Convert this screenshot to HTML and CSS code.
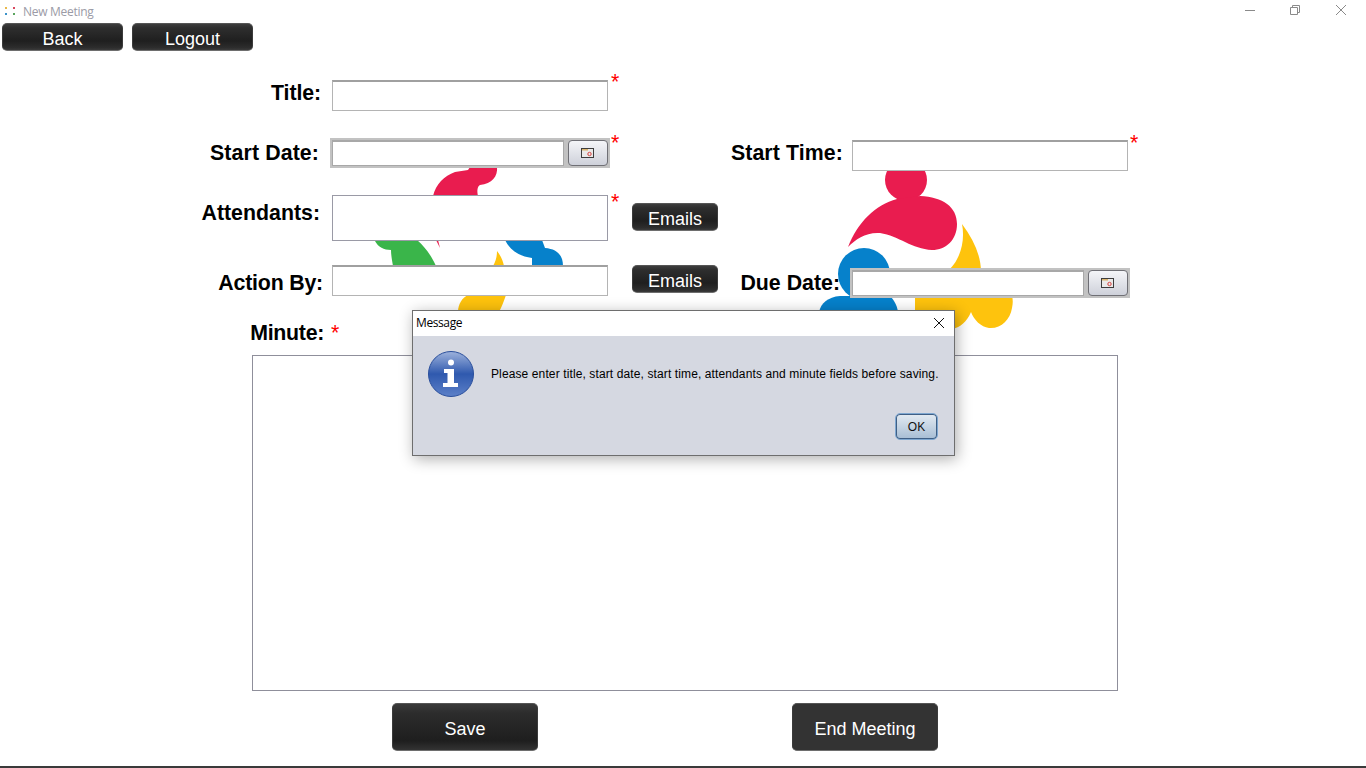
FILE: index.html
```html
<!DOCTYPE html>
<html lang="en">
<head>
<meta charset="utf-8">
<title>New Meeting</title>
<link rel="stylesheet" href="styles.css">
</head>
<body>
<div class="app">
  <svg class="logos" viewBox="0 0 1366 768" width="1366" height="768" aria-hidden="true">
    <g class="red">
      <path d="M433 196C436 184 444 176 455 172L468 170L470 167H497C498 176 492 184 480 185C477 187 477 191 478 196Z"/>
      <path d="M436 240L440 248L438 240Z"/>
      <circle cx="906" cy="180" r="21"/>
      <path d="M848 247C858 222 875 205 897 199L920 196C943 197 957 207 957 224C957 240 946 250 932 250C912 249 899 236 880 233C866 232 856 239 848 247Z"/>
    </g>
    <g class="green">
      <path d="M375 241C378 247 384 250 391 250C391 255 392 260 393 266H436C431 255 425 247 417 240Z"/>
    </g>
    <g class="blue">
      <path d="M505 240C510 250 518 256 532 258V266H563C563 256 558 249 545 248L542 240Z"/>
      <circle cx="864" cy="274" r="26"/>
      <path d="M819 312C821 303 828 297 840 296H890C894 300 897 305 898 312V330H819Z"/>
    </g>
    <g class="yellow">
      <path d="M497 251C501 256 503 261 504 266H493C496 261 497 256 497 251Z"/>
      <path d="M458 312C458 304 462 298 468 295H506C504 301 502 306 499 312Z"/>
      <path d="M962 224C974 240 981 256 981 272H946C958 264 966 244 962 224Z"/>
      <path d="M915 296H1012C1013 300 1013 303 1012 308C1010 320 1001 329 989 328C981 327 974 320 971 312C967 322 960 327 953 329L915 312Z"/>
    </g>
  </svg>

  <header class="titlebar">
    <svg class="app-icon" viewBox="0 0 11 8" width="11" height="8" aria-hidden="true">
      <rect class="dot-a" x="0" y="0" width="2" height="2"/>
      <rect class="dot-b" x="8" y="0" width="2" height="2"/>
      <rect class="dot-c" x="0" y="6" width="2" height="2"/>
      <rect class="dot-d" x="8" y="6" width="2" height="2"/>
    </svg>
    <span class="window-title">New Meeting</span>
    <div class="window-controls">
      <svg class="win-min" viewBox="0 0 10 1" width="10" height="1" aria-hidden="true"><path d="M0 .5H10"/></svg>
      <svg class="win-max" viewBox="0 0 10 10" width="10" height="10" aria-hidden="true"><path d="M.5 2.5H7.5V9.5H.5ZM2.5 2.5V.5H9.5V7.5H7.5"/></svg>
      <svg class="win-close" viewBox="0 0 10 10" width="10" height="10" aria-hidden="true"><path d="M0 0L10 10M10 0L0 10"/></svg>
    </div>
  </header>

  <nav class="toolbar">
    <button class="btn btn-nav">Back</button>
    <button class="btn btn-nav">Logout</button>
  </nav>

  <main class="form">
    <div class="row row-title">
      <label class="label label-title">Title:</label>
      <div class="input input-first"></div>
      <span class="star">*</span>
    </div>

    <div class="row row-start">
      <label class="label label-start">Start Date:</label>
      <div class="picker picker-start">
        <div class="picker-field"></div>
        <div class="picker-btn">
          <svg class="cal" viewBox="0 0 13 10" width="13" height="10" aria-hidden="true">
            <rect class="cal-bg" x=".5" y=".5" width="12" height="9"/>
            <rect class="cal-top" x="1" y="1" width="6" height="1.5"/>
            <circle class="cal-dot" cx="8.5" cy="6" r="1.7"/>
          </svg>
        </div>
      </div>
      <span class="star star-date">*</span>
      <label class="label label-time">Start Time:</label>
      <div class="input input-time"></div>
      <span class="star star-time">*</span>
    </div>

    <div class="row row-att">
      <label class="label label-att">Attendants:</label>
      <div class="input input-att"></div>
      <span class="star">*</span>
      <button class="btn btn-email btn-email-att">Emails</button>
    </div>

    <div class="row row-action">
      <label class="label label-action">Action By:</label>
      <div class="input input-action"></div>
      <button class="btn btn-email btn-email-action">Emails</button>
      <label class="label label-due">Due Date:</label>
      <div class="picker picker-due">
        <div class="picker-field"></div>
        <div class="picker-btn">
          <svg class="cal" viewBox="0 0 13 10" width="13" height="10" aria-hidden="true">
            <rect class="cal-bg" x=".5" y=".5" width="12" height="9"/>
            <rect class="cal-top" x="1" y="1" width="6" height="1.5"/>
            <circle class="cal-dot" cx="8.5" cy="6" r="1.7"/>
          </svg>
        </div>
      </div>
    </div>

    <div class="row row-minute">
      <label class="label label-minute">Minute:</label>
      <span class="star star-minute">*</span>
    </div>

    <div class="minutes"></div>

    <div class="actions">
      <button class="btn btn-action btn-save">Save</button>
      <button class="btn btn-action btn-end">End Meeting</button>
    </div>
  </main>

  <footer class="bottom-line"></footer>

  <section class="dialog" role="dialog">
    <div class="dialog-title">
      <span>Message</span>
      <svg class="dialog-close" viewBox="0 0 10 10" width="10" height="10" aria-hidden="true"><path d="M0 0L10 10M10 0L0 10"/></svg>
    </div>
    <div class="dialog-body">
      <div class="dialog-message">
        <svg class="info" viewBox="0 0 48 48" width="48" height="48" aria-hidden="true">
          <defs>
            <linearGradient id="infoGrad" x1="0" y1="0" x2="0" y2="1">
              <stop offset="0" stop-color="#9db2dc"/>
              <stop offset=".5" stop-color="#2f59ae"/>
              <stop offset="1" stop-color="#5c80c8"/>
            </linearGradient>
          </defs>
          <circle cx="24" cy="24" r="22.5" fill="url(#infoGrad)" stroke="#2a4f9c"/>
          <circle cx="24" cy="12.500" r="3" fill="#fff"/>
          <path d="M17 19H27V33H31V37H16V33H20.500V23H17Z" fill="#fff"/>
        </svg>
        <p>Please enter title, start date, start time, attendants and minute fields before saving.</p>
      </div>
      <div class="dialog-actions"><button class="btn-ok">OK</button></div>
    </div>
  </section>
</div>
</body>
</html>
```

FILE: styles.css
```css
* { box-sizing: border-box; }
html, body { margin: 0; padding: 0; background: #fff; }
body { font-family: "Liberation Sans", Arial, sans-serif; color: #000; }

.app { position: relative; width: 1366px; height: 768px; overflow: hidden; display: flex; flex-direction: column; background: #fff; }

.logos { position: absolute; left: 0; top: 0; }
.red { fill: #e91c4f; }
.green { fill: #3ab54a; }
.blue { fill: #0681cb; }
.yellow { fill: #fec30d; }

.titlebar { position: relative; height: 23px; flex: none; display: flex; align-items: center; padding-left: 5px; }
.app-icon { margin-top: -1px; }
.dot-a { fill: #e9b949; }
.dot-b { fill: #d8485f; }
.dot-c { fill: #3a93c9; }
.dot-d { fill: #5aa55f; }
.window-title { margin-left: 7px; font: 12px "Open Sans", "Noto Sans", sans-serif; letter-spacing: -.28px; color: #9b9ba6; }
.window-controls { margin-left: auto; display: flex; align-items: flex-start; align-self: flex-start; }
.window-controls svg { fill: none; stroke: #8a8a8a; stroke-width: 1; display: block; }
.win-min { margin-top: 10px; margin-right: 35px; }
.win-max { margin-top: 5px; margin-right: 36px; }
.win-close { margin-top: 5px; margin-right: 20px; }

.btn { font-family: "Liberation Sans", Arial, sans-serif; color: #fff; padding: 4px 0 0; cursor: pointer; }

.toolbar { position: relative; flex: none; height: 28px; display: flex; gap: 9px; padding-left: 2px; }
.btn-nav, .btn-email {
  font-size: 18px; height: 28px; border-radius: 5px;
  border: 1px solid #3b3b3b; border-top-color: #555; border-bottom-color: #6e6e6e;
  background: linear-gradient(#3d3d3d 0, #2e2e2e 15%, #1f1f1f 65%, #2c2c2c 90%, #3a3a3a 100%);
}
.btn-nav { width: 121px; }

.form { position: relative; flex: none; display: flex; flex-direction: column; }
.row { display: flex; align-items: flex-start; }
.label { font-weight: bold; font-size: 21.33px; line-height: 26px; text-align: right; flex: none; white-space: nowrap; }
.input { background: #fff; border: 1px solid #b4b4b4; border-top: 2px solid #a0a0a0; width: 276px; height: 31px; flex: none; }
.star { color: #f00; font-size: 21.33px; line-height: 24px; width: 24px; flex: none; padding-left: 3px; }

.row-title { margin-top: 22px; height: 38px; }
.label-title { width: 321px; margin-top: 7px; letter-spacing: -.1px; }
.input-first { margin-left: 11px; margin-top: 7px; }
.row-title .star { margin-top: -3px; }

.row-start { margin-top: 27px; height: 33px; }
.label-start { width: 319px; margin-top: 2px; letter-spacing: .1px; }
.picker { display: flex; align-items: center; gap: 4px; width: 280px; height: 30px; background: #c2c2c2; padding: 2px; flex: none; }
.picker-start { margin-left: 11px; }
.picker-field { width: 232px; height: 26px; background: #fff; border: 1px solid #a8a8a8; border-top-width: 2px; flex: none; }
.picker-btn { width: 40px; height: 26px; flex: none; padding-right: 2px; border: 1px solid #6f6f75; border-radius: 4px; background: linear-gradient(#f4f5f8, #ced1da); display: flex; align-items: center; justify-content: center; }
.cal-bg { fill: #e9e9e9; stroke: #3c3c3c; stroke-width: 1; }
.cal-top { fill: #d9b36d; }
.cal-dot { fill: none; stroke: #d8413f; stroke-width: 1; }
.star-date { padding-left: 1px; margin-top: -7px; }
.label-time { width: 114px; margin-left: 95px; margin-top: 2px; letter-spacing: .1px; }
.input-time { margin-left: 9px; margin-top: 2px; }
.star-time { padding-left: 2px; margin-top: -7px; }

.row-att { margin-top: 24px; height: 46px; }
.label-att { width: 320px; margin-top: 5px; }
.input-att { margin-left: 12px; height: 46px; border: 1px solid #9a9aa6; }
.row-att .star { margin-top: -5px; }
.btn-email { width: 86px; }
.btn-email-att { margin-top: 8px; }

.row-action { margin-top: 24px; height: 33px; }
.label-action { width: 323px; margin-top: 5px; letter-spacing: -.2px; }
.input-action { margin-left: 9px; }
.btn-email-action { margin-left: 24px; }
.label-due { width: 100px; margin-left: 22px; margin-top: 5px; }
.picker-due { margin-left: 10px; margin-top: 3px; }

.row-minute { margin-top: 22px; height: 26px; }
.label-minute { width: 324px; letter-spacing: -.3px; }
.star-minute { margin-top: 1px; padding-left: 7px; }

.minutes { margin-left: 252px; margin-top: 9px; width: 866px; height: 336px; background: #fff; border: 1px solid #8f8f9b; }

.actions { display: flex; margin-top: 12px; margin-left: 392px; gap: 254px; }
.btn-action { width: 146px; height: 48px; font-size: 18px; border-radius: 5px; border: 1px solid #3b3b3b; border-top-color: #555; border-bottom-color: #6e6e6e; }
.btn-save { background: linear-gradient(#3a3a3a 0, #2c2c2c 20%, #1e1e1e 80%, #333 100%); }
.btn-end { background: #333; }

.bottom-line { position: relative; margin-top: auto; height: 2px; background: #3a3a3a; flex: none; }

.dialog { position: absolute; left: 412px; top: 310px; width: 543px; height: 146px; background: #d5d8e1; border: 1px solid #6e6e6e; box-shadow: 2px 3px 14px rgba(0,0,0,.32); display: flex; flex-direction: column; }
.dialog-title { height: 25px; flex: none; background: #fff; display: flex; align-items: center; justify-content: space-between; padding: 0 10px 2px 3px; font: 12px "Open Sans", "Noto Sans", sans-serif; letter-spacing: -.4px; }
.dialog-close { fill: none; stroke: #111; stroke-width: 1; }
.dialog-body { flex: 1; display: flex; flex-direction: column; }
.dialog-message { display: flex; align-items: center; padding: 14px 0 0 14px; }
.dialog-message p { margin: 0 0 0 16px; font-size: 12px; line-height: 48px; letter-spacing: .115px; white-space: nowrap; }
.dialog-actions { display: flex; justify-content: flex-end; padding: 15px 16px 0 0; }
.btn-ok { width: 43px; height: 27px; padding: 0; font: 12px "Liberation Sans", Arial, sans-serif; color: #111; border-radius: 5px; border: 1px solid #7ea7d0; background: linear-gradient(#e4ebf2, #a6bdd4); box-shadow: inset 0 0 0 1px #3f5f85; }
```
